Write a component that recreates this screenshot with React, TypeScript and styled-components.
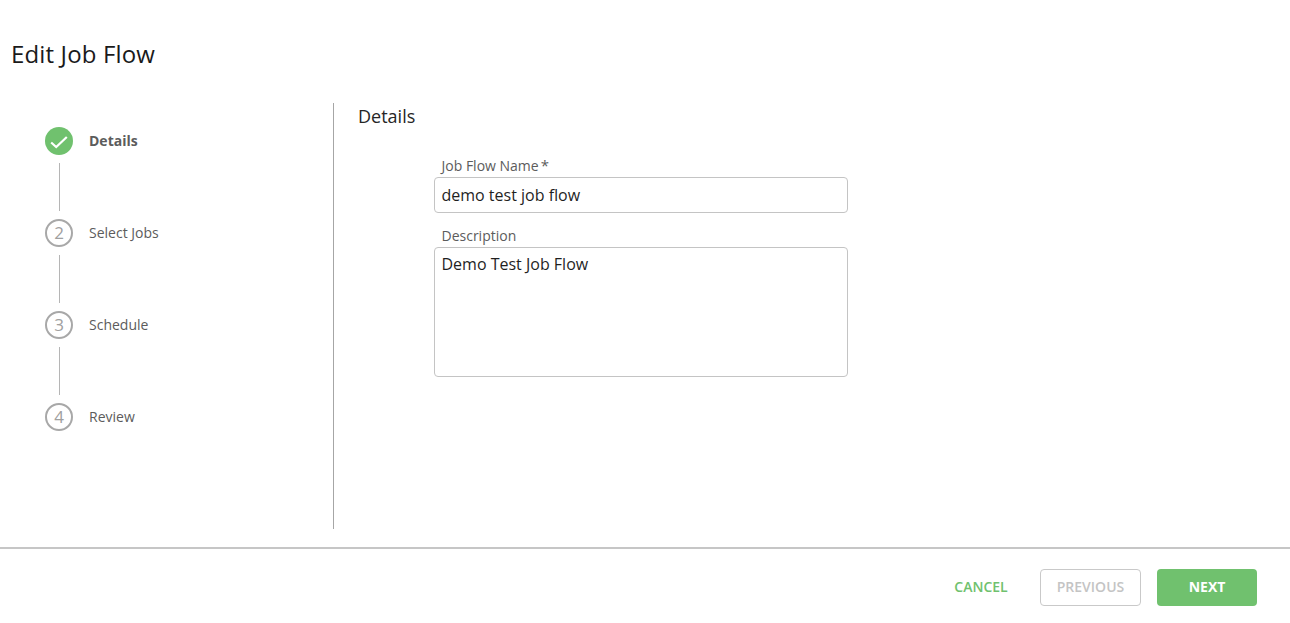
import React from 'react'
import styled, { createGlobalStyle } from 'styled-components'

const GlobalStyle = createGlobalStyle`
  html, body {
    margin: 0;
    padding: 0;
    background: #fff;
    font-family: "Open Sans", "Noto Sans", sans-serif;
  }
`

const Page = styled.div`
  width: 1290px;
  height: 623px;
  display: flex;
  flex-direction: column;
  overflow: hidden;
`

const Title = styled.h1`
  margin: 0;
  padding: 38px 0 0 11px;
  height: 64px;
  box-sizing: border-box;
  font-size: 24px;
  line-height: 32px;
  letter-spacing: 0.15px;
  font-weight: 400;
  color: #1a1a1a;
`

const Body = styled.div`
  display: flex;
  margin-top: 39px;
  height: 426px;
`

const Sidebar = styled.div`
  width: 334px;
  box-sizing: border-box;
  padding: 24px 0 0 45px;
  border-right: 1px solid #a6a6a6;
  flex: none;
`

const Step = styled.div`
  display: flex;
  align-items: center;
  height: 28px;
  gap: 16px;
`

const Circle = styled.div<{ $done?: boolean }>`
  width: 28px;
  height: 28px;
  box-sizing: border-box;
  border-radius: 50%;
  display: flex;
  align-items: center;
  justify-content: center;
  flex: none;
  font-size: 17px;
  color: #a0a0a0;
  padding-bottom: ${({ $done }) => ($done ? '0' : '1px')};
  background: ${({ $done }) => ($done ? '#70c16e' : '#fff')};
  border: ${({ $done }) => ($done ? 'none' : '2px solid #a8a8a8')};
`

const StepLabel = styled.span<{ $active?: boolean }>`
  font-size: 14px;
  line-height: 20px;
  color: #5c5c5c;
  font-weight: ${({ $active }) => ($active ? 700 : 400)};
`

const Connector = styled.div`
  width: 1px;
  height: 48px;
  margin: 8px 0 8px 14px;
  background: #b5b5b5;
`

const Content = styled.div`
  flex: 1;
  padding: 1px 0 0 24px;
`

const SectionTitle = styled.h2`
  margin: 0;
  font-size: 18px;
  line-height: 24px;
  font-weight: 400;
  color: #262626;
`

const Form = styled.div`
  width: 414px;
  margin: 27px 0 0 76px;
  display: flex;
  flex-direction: column;
`

const FieldLabel = styled.label`
  display: block;
  padding-left: 7.5px;
  font-size: 14px;
  line-height: 22px;
  height: 22px;
  color: #5c5c5c;
`

const Required = styled.span`
  margin-left: 2px;
  font-size: 15px;
  line-height: 0;
`

const TextBox = styled.div<{ $tall?: boolean }>`
  box-sizing: border-box;
  width: 414px;
  height: ${({ $tall }) => ($tall ? '130px' : '36px')};
  margin-bottom: ${({ $tall }) => ($tall ? '0' : '12px')};
  padding: ${({ $tall }) => ($tall ? '5px 6.5px' : '6px 6.5px')};
  border: 1px solid #c4c4c4;
  border-radius: 4px;
  font-size: 16px;
  line-height: 22px;
  color: #1f1f1f;
`

const Footer = styled.div`
  margin-top: 18px;
  height: 76px;
  box-sizing: border-box;
  border-top: 2px solid #c6c6c6;
  padding: 20px 33px 0 0;
  display: flex;
  justify-content: flex-end;
  align-items: flex-start;
`

const FooterButton = styled.button<{ $kind: 'link' | 'ghost' | 'solid' }>`
  height: 37px;
  box-sizing: border-box;
  border-radius: 4px;
  padding: 0 0 2px;
  font-family: inherit;
  font-size: 14px;
  font-weight: ${({ $kind }) => ($kind === 'solid' ? 700 : 600)};
  width: ${({ $kind }) => ($kind === 'link' ? '54px' : $kind === 'ghost' ? '101px' : '100px')};
  margin-left: ${({ $kind }) => ($kind === 'link' ? '0' : $kind === 'ghost' ? '32px' : '16px')};
  color: ${({ $kind }) => ($kind === 'link' ? '#70c16e' : $kind === 'ghost' ? '#c4c4c4' : '#fff')};
  background: ${({ $kind }) => ($kind === 'solid' ? '#70c16e' : '#fff')};
  border: ${({ $kind }) => ($kind === 'ghost' ? '1px solid #c9c9c9' : 'none')};
`

const CheckMark = styled.svg`
  margin-top: 2px;
`

const steps = ['Details', 'Select Jobs', 'Schedule', 'Review']

const App: React.FC = () => {
  return (
    <Page>
      <GlobalStyle />
      <Title>Edit Job Flow</Title>
      <Body>
        <Sidebar>
          {steps.map((name, i) => (
            <React.Fragment key={name}>
              <Step>
                <Circle $done={i === 0}>
                  {i === 0 ? (
                    <CheckMark width="18" height="13" viewBox="0 0 18 13" fill="none">
                      <path d="M1.2 6.5 L6.2 11 L16.8 1" stroke="#fff" strokeWidth="2.2" />
                    </CheckMark>
                  ) : (
                    i + 1
                  )}
                </Circle>
                <StepLabel $active={i === 0}>{name}</StepLabel>
              </Step>
              {i < steps.length - 1 && <Connector />}
            </React.Fragment>
          ))}
        </Sidebar>
        <Content>
          <SectionTitle>Details</SectionTitle>
          <Form>
            <FieldLabel>Job Flow Name<Required>*</Required></FieldLabel>
            <TextBox>demo test job flow</TextBox>
            <FieldLabel>Description</FieldLabel>
            <TextBox $tall>Demo Test Job Flow</TextBox>
          </Form>
        </Content>
      </Body>
      <Footer>
        <FooterButton $kind="link">CANCEL</FooterButton>
        <FooterButton $kind="ghost">PREVIOUS</FooterButton>
        <FooterButton $kind="solid">NEXT</FooterButton>
      </Footer>
    </Page>
  )
}

export default App
